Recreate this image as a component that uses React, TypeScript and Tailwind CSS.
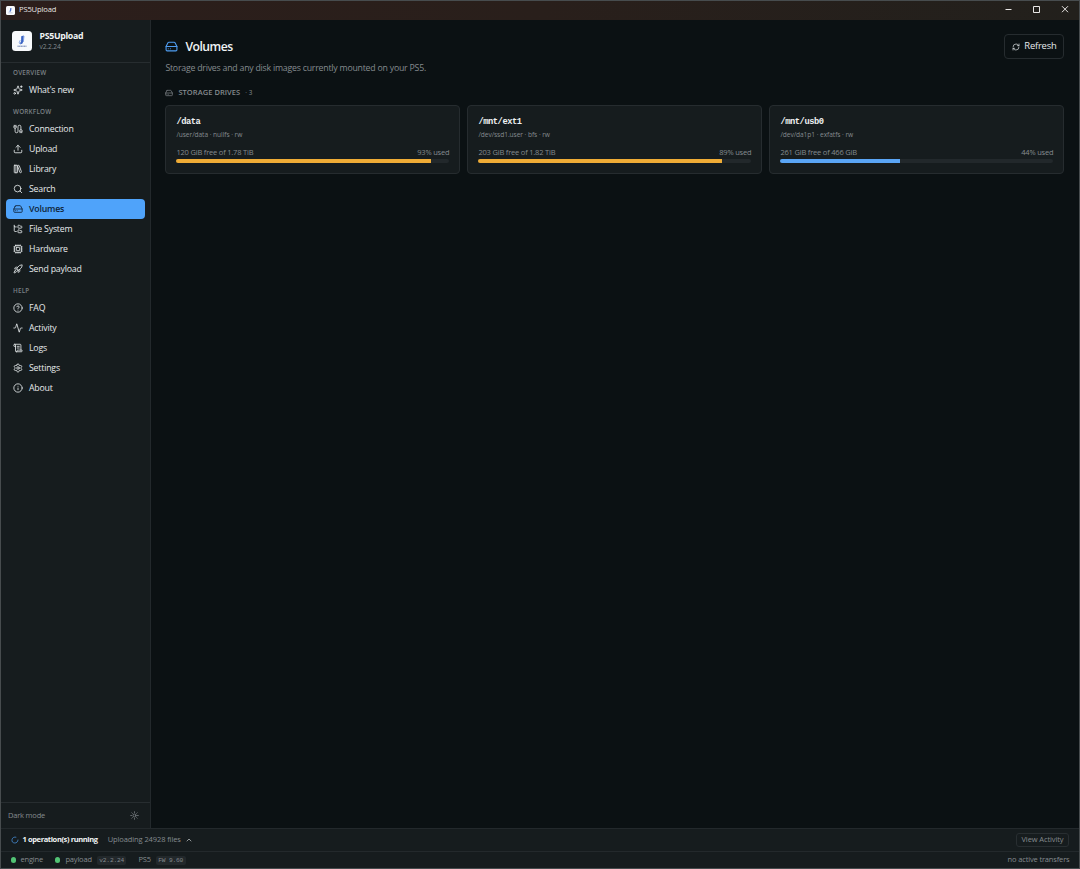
import {
  Activity,
  Cable,
  ChevronUp,
  CircleHelp,
  Cpu,
  FolderTree,
  HardDrive,
  Info,
  LibraryBig,
  LoaderCircle,
  RefreshCw,
  Rocket,
  ScrollText,
  Search,
  Settings,
  Sparkles,
  Sun,
  Upload,
} from 'lucide-react';

const NAV = [
  { label: 'Overview', items: [{ name: "What's new", icon: Sparkles }] },
  {
    label: 'Workflow',
    items: [
      { name: 'Connection', icon: Cable },
      { name: 'Upload', icon: Upload },
      { name: 'Library', icon: LibraryBig },
      { name: 'Search', icon: Search },
      { name: 'Volumes', icon: HardDrive },
      { name: 'File System', icon: FolderTree },
      { name: 'Hardware', icon: Cpu },
      { name: 'Send payload', icon: Rocket },
    ],
  },
  {
    label: 'Help',
    items: [
      { name: 'FAQ', icon: CircleHelp },
      { name: 'Activity', icon: Activity },
      { name: 'Logs', icon: ScrollText },
      { name: 'Settings', icon: Settings },
      { name: 'About', icon: Info },
    ],
  },
];

const VOLUMES = [
  { path: '/data', source: '/user/data · nullfs · rw', free: '120 GiB free of 1.78 TiB', used: 93.4 },
  { path: '/mnt/ext1', source: '/dev/ssd1.user · bfs · rw', free: '203 GiB free of 1.82 TiB', used: 89.2 },
  { path: '/mnt/usb0', source: '/dev/da1p1 · exfatfs · rw', free: '261 GiB free of 466 GiB', used: 43.9 },
];

function Logo({ className }: { className: string }) {
  return (
    <svg viewBox="0 0 20 20" className={className}>
      <rect width="20" height="20" rx="3.5" fill="#f8fafc" />
      <path d="M9.2 5.2l2.6-.7-.7 6.3c-.2 1.7-1.2 2.5-3 2.5l.3-2c.4 0 .6-.2.7-.7z" fill="#3b64c4" />
      <path d="M8.2 9.2l-1 2.6 1.1 1.4M12 5l-.7 6" stroke="#6d93dd" strokeWidth=".8" fill="none" />
      <path d="M5.5 15.2h9" stroke="#6379ad" strokeWidth="1" strokeDasharray="1.3 .3" />
    </svg>
  );
}

function TitleBar() {
  return (
    <div className="flex h-[19px] shrink-0 items-center bg-linear-to-r from-[#2c1e1b] via-[#291f1b] to-[#22201c] pb-[1px] pl-[5px] text-[#e8e6e5]">
      <Logo className="size-[9px]" />
      <span className="ml-[4px] text-[7.6px] tracking-[-0.15px]">PS5Upload</span>
      <div className="ml-auto flex items-center">
        <svg viewBox="0 0 28 18" className="h-[18px] w-[28px]" fill="none" stroke="currentColor">
          <path d="M10.5 8.5h6" />
        </svg>
        <svg viewBox="0 0 28 18" className="h-[18px] w-[28px]" fill="none" stroke="currentColor">
          <path d="M10.5 5.5h6v6h-6z" />
        </svg>
        <svg viewBox="0 0 28 18" className="h-[18px] w-[28px]" fill="none" stroke="currentColor">
          <path d="M11 5.2l6 6M17 5.2l-6 6" />
        </svg>
      </div>
    </div>
  );
}

function Sidebar() {
  return (
    <aside className="flex w-[150px] shrink-0 flex-col border-r border-[#23292c] bg-[#161c1e]">
      <div className="flex h-[43px] shrink-0 items-center gap-[7.5px] border-b border-[#272d30] pl-[11px]">
        <Logo className="size-[20px]" />
        <div className="flex flex-col pt-[1px]">
          <span className="text-[8.75px] leading-[11px] font-bold tracking-[-0.3px] text-[#f1f4f5]">PS5Upload</span>
          <span className="text-[6.6px] leading-[10px] tracking-[-0.1px] text-[#858b8f]">v2.2.24</span>
        </div>
      </div>
      <nav className="flex flex-1 flex-col gap-[6.7px] pt-[4.5px] pr-[5px] pl-[4.5px]">
        {NAV.map((group) => (
          <div key={group.label}>
            <div className="h-[12.5px] pl-[7.5px] text-[6.3px] leading-[10px] font-semibold tracking-[0.22px] text-[#7b8185] uppercase">
              {group.label}
            </div>
            {group.items.map(({ name, icon: Icon }) => (
              <div
                key={name}
                className={
                  name === 'Volumes'
                    ? 'flex h-[20px] items-center gap-[6px] rounded-[4px] bg-[#4fa3fa] pl-[7.5px] font-semibold text-[#0e2338]'
                    : 'flex h-[20px] items-center gap-[6px] pl-[7.5px] font-medium text-[#e6eaec]'
                }
              >
                <Icon className="size-[10px]" />
                <span className="pt-[1px] text-[8.75px] tracking-[-0.2px]">{name}</span>
              </div>
            ))}
          </div>
        ))}
      </nav>
      <div className="flex h-[26px] shrink-0 items-center justify-between border-t border-[#272d30] pr-[11px] pl-[7px] text-[#858b8f]">
        <span className="text-[7.5px]">Dark mode</span>
        <Sun className="size-[9px]" />
      </div>
    </aside>
  );
}

function VolumeCard({ volume }: { volume: (typeof VOLUMES)[number] }) {
  return (
    <div className="h-[69px] rounded-[4px] border border-[#262c2f] bg-[#161c1e] px-[10px] pt-[10px]">
      <div className="font-['Liberation_Mono',monospace] text-[8.75px] leading-[12px] font-bold tracking-[-0.45px] text-[#eef1f2]">
        {volume.path}
      </div>
      <div className="mt-[1px] text-[6.6px] leading-[12px] tracking-[-0.05px] text-[#858b8f]">{volume.source}</div>
      <div className="mt-[6px] flex justify-between text-[7.5px] leading-[11px] text-[#858b8f]">
        <span>{volume.free}</span>
        <span>{Math.round(volume.used)}% used</span>
      </div>
      <div className="mt-[1px] h-[4px] overflow-hidden rounded-full bg-[#22282b]">
        <div
          className={volume.used > 80 ? 'h-full bg-[#efac36]' : 'h-full bg-[#5aa5f5]'}
          style={{ width: `${volume.used}%` }}
        />
      </div>
    </div>
  );
}

function StatusBar() {
  return (
    <footer className="shrink-0 bg-[#161c1e] text-[7.5px] text-[#858b8f]">
      <div className="flex h-[23px] items-center border-t border-[#23292c] pr-[10px] pl-[9.5px]">
        <LoaderCircle className="size-[8px] text-[#4fa3fa]" />
        <span className="ml-[4px] font-bold tracking-[-0.38px] text-[#f1f4f5]">1 operation(s) running</span>
        <span className="ml-[10px] tracking-[-0.1px]">Uploading 24928 files</span>
        <ChevronUp className="ml-[4.5px] size-[8px] text-[#d0d4d6]" />
        <span className="ml-auto flex h-[14px] items-center rounded-[3px] border border-[#282e31] px-[4.5px] tracking-[-0.1px]">
          View Activity
        </span>
      </div>
      <div className="flex h-[17px] items-center border-t border-[#23292c] pr-[9.5px] pl-[9.5px]">
        <span className="size-[5.5px] rounded-full bg-[#52c374]" />
        <span className="ml-[4.5px]">engine</span>
        <span className="ml-[12px] size-[5.5px] rounded-full bg-[#52c374]" />
        <span className="ml-[5px]">payload</span>
        <span className="ml-[5px] rounded-[2px] bg-[#22282b] px-[2.5px] font-['Liberation_Mono',monospace] text-[6.2px] leading-[9px]">
          v2.2.24
        </span>
        <span className="ml-[12px]">PS5</span>
        <span className="ml-[5px] rounded-[2px] bg-[#22282b] px-[2.5px] font-['Liberation_Mono',monospace] text-[6.2px] leading-[9px]">
          FW 9.60
        </span>
        <span className="ml-auto tracking-[-0.15px]">no active transfers</span>
      </div>
    </footer>
  );
}

export default function App() {
  return (
    <div className="flex h-[869px] w-[1080px] flex-col overflow-hidden border border-[#474c4e] bg-[#0b1113] font-['Open_Sans',sans-serif] tracking-[-0.19px]">
      <TitleBar />
      <div className="flex min-h-0 flex-1">
        <Sidebar />
        <main className="flex-1 pt-[14px] pr-[14.6px] pl-[14.4px]">
          <div className="flex items-start justify-between">
            <div>
              <div className="flex h-[25px] items-center gap-[7px]">
                <HardDrive className="size-[13px] text-[#4f9df2]" />
                <h1 className="pt-[1px] text-[12.2px] font-semibold tracking-[-0.5px] text-[#f1f4f5]">Volumes</h1>
              </div>
              <p className="mt-[2px] text-[8.75px] leading-[14px] tracking-[-0.22px] text-[#858b8f]">
                Storage drives and any disk images currently mounted on your PS5.
              </p>
            </div>
            <button className="flex h-[25px] w-[60px] items-center justify-center gap-[4px] rounded-[4px] border border-[#262c2f] text-[9.4px] font-medium text-[#e6eaec]">
              <RefreshCw className="size-[8px]" />
              Refresh
            </button>
          </div>
          <div className="mt-[12px] flex h-[12px] items-center text-[#858b8f]">
            <HardDrive className="size-[8px]" />
            <span className="ml-[5px] text-[7.5px] font-semibold tracking-[0.05px]">STORAGE DRIVES</span>
            <span className="ml-[5px] text-[6.3px] tracking-[0.1px]">· 3</span>
          </div>
          <div className="mt-[6px] grid grid-cols-3 gap-[7px]">
            {VOLUMES.map((volume) => (
              <VolumeCard key={volume.path} volume={volume} />
            ))}
          </div>
        </main>
      </div>
      <StatusBar />
    </div>
  );
}
